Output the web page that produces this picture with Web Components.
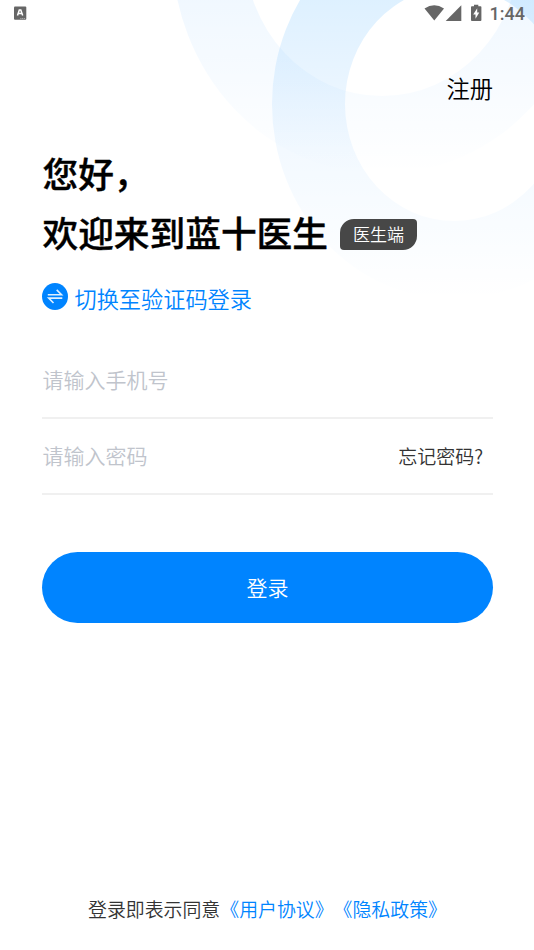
<!DOCTYPE html>
<html lang="zh-CN">
<head>
<meta charset="utf-8">
<title>登录</title>
<style>
html, body { margin: 0; height: 100%; background: #fff; }
body { font-family: "Noto Sans CJK SC", sans-serif; font-weight: 350; text-spacing-trim: space-all; overflow: hidden; }
</style>
</head>
<body>
<login-page></login-page>
<script>
function define(name, html) {
  const t = document.createElement('template');
  t.innerHTML = html;
  customElements.define(name, class extends HTMLElement {
    constructor() {
      super();
      this.attachShadow({ mode: 'open' }).appendChild(t.content.cloneNode(true));
    }
  });
}

define('ring-backdrop', `
<style>
:host { display: block; position: absolute; inset: 0 0 auto 0; height: 310px; z-index: -1; }
svg { display: block; }
</style>
<svg width="534" height="310" viewBox="0 0 534 310">
  <defs>
    <linearGradient id="a" gradientUnits="userSpaceOnUse" x1="0" y1="0" x2="0" y2="174">
      <stop offset="0" stop-color="#0084ff" stop-opacity=".058"/><stop offset="1" stop-color="#0084ff" stop-opacity="0"/>
    </linearGradient>
    <linearGradient id="b" gradientUnits="userSpaceOnUse" x1="0" y1="0" x2="0" y2="300">
      <stop offset="0" stop-color="#0090ff" stop-opacity=".13"/><stop offset=".5" stop-color="#0084ff" stop-opacity=".048"/><stop offset="1" stop-color="#0084ff" stop-opacity="0"/>
    </linearGradient>
  </defs>
  <path fill="url(#a)" fill-rule="evenodd" d="M172-51a210 225 0 1 0 420 0a210 225 0 1 0-420 0ZM244.400-51a137.600 147 0 1 0 275.200 0a137.600 147 0 1 0-275.200 0Z"/>
  <path fill="url(#b)" fill-rule="evenodd" d="M272 104a182 195 0 1 0 364 0a182 195 0 1 0-364 0ZM345 104a109 117 0 1 0 218 0a109 117 0 1 0-218 0Z"/>
</svg>`);

define('status-bar', `
<style>
:host { display: flex; justify-content: space-between; height: 28px; box-sizing: border-box; padding: 0 9px 0 14px; color: #666; }
svg { display: block; }
.r { display: flex; }
.t { font: 500 18px/28px Roboto, sans-serif; letter-spacing: 0; }
</style>
<svg width="13" height="28" viewBox="0 0 13 28"><rect y="6.500" width="12.300" height="13.300" rx="1" fill="#666"/><path d="M3.500 15.600 5.300 9.900h1.500l1.900 5.700M4.300 13.600h3.600" fill="none" stroke="#fff" stroke-width="1.500"/><path d="M6.300 18.500h5" stroke="#bbb" stroke-width=".8" stroke-dasharray="1.200 .6"/></svg>
<div class="r">
<svg width="66" height="28" viewBox="424 0 66 28" fill="#666">
  <path d="M424.500 8.600Q434.200 1.700 444 8.600L434.300 20.600Z"/>
  <path d="M461.300 5.300V21H445.700Z"/>
  <path fill-rule="evenodd" d="M474 4.700h4.300v1.500h2.200q.9 0 .9.900V20q0 1-.9 1h-8.600q-.9 0-.9-1V7.100q0-.9.900-.9h2.100ZM477.200 8.200l-4 6.300h2.300v4.300l3.800-6.400h-2.100Z"/>
</svg><span class="t">1:44</span></div>`);

define('role-badge', `
<style>
:host { display: block; width: 77px; height: 31px; box-sizing: border-box; border-radius: 14px 4px 14px 4px; background: #474747; color: #fff; font-size: 17px; line-height: 30px; text-align: center; }
</style><slot></slot>`);

define('login-switch', `
<style>
:host { display: flex; align-items: center; gap: 6.500px; height: 34px; color: #0084ff; font-size: 22.200px; line-height: 34px; }
svg { display: block; margin-top: -3px; }
</style>
<svg width="26" height="27" viewBox="0 0 26 27"><ellipse cx="13" cy="13.500" rx="13" ry="13.400" fill="#0084ff"/><path d="M5.800 11.700H19.500L14.700 6.900M20.300 15.100H6.700L11.500 20" fill="none" stroke="#fff" stroke-opacity=".88" stroke-width="1.600"/></svg>
<span><slot></slot></span>`);

define('form-field', `
<style>
:host { display: flex; align-items: center; justify-content: space-between; height: 76.600px; box-sizing: border-box; padding: 0 0 1.400px .5px; border-bottom: 2px solid #f0f0f0; font-size: 21px; color: #c0c4cc; }
::slotted([slot=action]) { color: #333; font-size: 19px; margin-right: 10px; }
</style>
<span><slot></slot></span><slot name="action"></slot>`);

define('primary-button', `
<style>
:host { display: block; height: 71.300px; border-radius: 36px; background: #0084ff; color: #fff; font-size: 21px; line-height: 70px; text-align: center; }
</style><slot></slot>`);

define('agreement-line', `
<style>
:host { display: block; color: #333; font-size: 18.900px; line-height: 28px; white-space: nowrap; }
::slotted(a) { color: #0084ff; }
</style><slot></slot>`);

define('login-page', `
<style>
:host { display: flex; flex-direction: column; position: relative; height: 950px; width: 534px; overflow: hidden; isolation: isolate; color: #000; }
main { flex: 1; display: flex; flex-direction: column; padding: 0 41px 0 42px; }
.reg { align-self: flex-end; margin-top: 43px; font-size: 23.300px; line-height: 34px; }
h1 { margin: 38px 0 0; font-size: 35.700px; line-height: 59px; font-weight: 500; }
h1 > div:first-child, .w > span { padding-left: .5px; -webkit-text-stroke: .4px #000; }
.w { display: flex; align-items: center; gap: 12px; }
role-badge { font-weight: 350; margin-top: 6px; }
login-switch { margin-top: 20px; }
.form { margin-top: 27px; }
primary-button { margin-top: 56.800px; }
agreement-line { margin: auto 0 27px 46px; }
</style>
<ring-backdrop></ring-backdrop>
<status-bar></status-bar>
<main>
  <div class="reg">注册</div>
  <h1><div>您好，</div><div class="w"><span>欢迎来到蓝十医生</span><role-badge>医生端</role-badge></div></h1>
  <login-switch>切换至验证码登录</login-switch>
  <div class="form">
    <form-field>请输入手机号</form-field>
    <form-field>请输入密码<span slot="action">忘记密码?</span></form-field>
  </div>
  <primary-button>登录</primary-button>
  <agreement-line>登录即表示同意<a>《用户协议》</a><a>《隐私政策》</a></agreement-line>
</main>`);
</script>
</body>
</html>
